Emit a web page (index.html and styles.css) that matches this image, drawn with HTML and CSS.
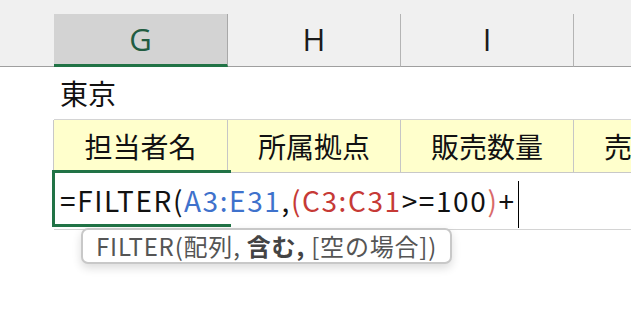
FILE: index.html
```html
<!DOCTYPE html>
<html>
  <head>
    <title>FILTER - Sheet</title>
    <link rel="stylesheet" href="styles.css">
  </head>
  <body>
    <div class="sheet">
      <div class="colheads">
        <div class="corner"></div>
        <div class="colhead selected">G</div>
        <div class="colhead">H</div>
        <div class="colhead">I</div>
        <div class="colhead"></div>
      </div>

      <div class="row row-title">
        <div class="cell">東京</div>
      </div>

      <div class="row row-head">
        <div class="cell">担当者名</div>
        <div class="cell">所属拠点</div>
        <div class="cell">販売数量</div>
        <div class="cell">売上金額</div>
      </div>

      <div class="row row-edit">
        <div class="selection"></div>
        <div class="formula">=FILTER(<span class="ref-a">A3:E31</span>,<span class="ref-c">(C3:C31</span>&gt;=100<span class="paren">)</span>+<span class="caret"></span></div>
        <div class="tip">FILTER(配列, <b>含む,</b> [空の場合])</div>
      </div>
    </div>
  </body>
</html>
```

FILE: styles.css
```css
body {
    margin: 0;
    background: #ffffff;
    font-family: "Noto Sans CJK JP", "Noto Sans", sans-serif;
    overflow: hidden;
}
.sheet {
    position: relative;
    width: 631px;
    height: 328px;
    overflow: hidden;
}
.colheads {
    display: flex;
    height: 67px;
    padding-top: 14px;
    box-sizing: border-box;
    background: #f0f0f0;
}
.corner {
    width: 54px;
    flex: none;
    border-bottom: 1px solid #9f9f9f;
}
.colhead {
    width: 173px;
    flex: none;
    box-sizing: border-box;
    display: flex;
    align-items: center;
    justify-content: center;
    padding-bottom: 2px;
    border-right: 1px solid #b4b4b4;
    border-bottom: 1px solid #9f9f9f;
    font-family: "Open Sans", "Noto Sans", sans-serif;
    font-size: 31px;
    color: #1b1b1b;
}
.colhead.selected {
    width: 174px;
    background: #d3d3d3;
    border-right-color: #a8a8a8;
    border-bottom: 3px solid #217346;
    padding-bottom: 0;
    color: #215c41;
}
.colhead:last-child {
    border-right: none;
}
.row {
    display: flex;
    margin-left: 54px;
}
.row-title {
    height: 53px;
    box-sizing: border-box;
    border-bottom: 1px solid #d4d4d4;
}
.row-title .cell {
    padding-left: 6px;
    font-size: 28px;
    line-height: 52px;
    color: #111111;
}
.row-head {
    height: 53px;
    box-sizing: border-box;
    border-bottom: 1px solid #c8c8c8;
    border-left: 1px solid #c8c8c8;
    margin-left: 53px;
}
.row-head .cell {
    width: 173px;
    flex: none;
    box-sizing: border-box;
    background: #ffffcc;
    border-right: 1px solid #c6c6c6;
    text-align: center;
    font-size: 28px;
    line-height: 52px;
    color: #111111;
    white-space: nowrap;
    overflow: hidden;
}
.row-head .cell:first-child {
    width: 174px;
}
.row-edit {
    position: relative;
    height: 56px;
    border-bottom: 1px solid #d4d4d4;
}
.selection {
    position: absolute;
    left: -2px;
    top: -3px;
    width: 179px;
    height: 57px;
    box-sizing: border-box;
    border: 3px solid #217346;
    border-right: none;
}
.formula {
    position: relative;
    padding-left: 6px;
    font-size: 28px;
    letter-spacing: 1.6px;
    line-height: 54px;
    color: #111111;
    white-space: nowrap;
}
.ref-a {
    color: #3f72cc;
}
.ref-c {
    color: #c63a36;
}
.paren {
    color: #d96a6a;
}
.caret {
    display: inline-block;
    width: 1px;
    height: 47px;
    margin-left: 2px;
    background: #000000;
    vertical-align: middle;
}
.tip {
    position: absolute;
    left: 27px;
    top: 55px;
    height: 36px;
    box-sizing: border-box;
    padding: 0 13px;
    background: #ffffff;
    border: 2px solid #c8c8c8;
    border-radius: 7px;
    box-shadow: 0 4px 10px rgba(0, 0, 0, 0.14);
    font-size: 24px;
    letter-spacing: 0.8px;
    line-height: 31px;
    color: #555555;
    white-space: nowrap;
}
.tip b {
    color: #444444;
}
```
